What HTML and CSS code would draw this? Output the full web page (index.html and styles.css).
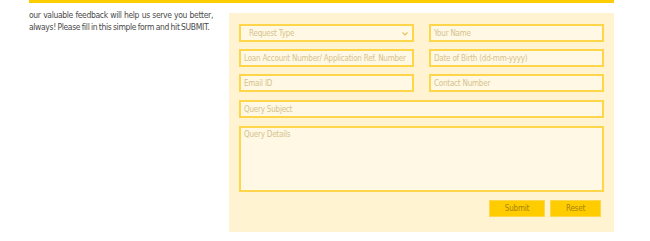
FILE: index.html
```html
<!DOCTYPE html>
<html>
<head>
<meta charset="utf-8">
<link rel="stylesheet" href="styles.css">
</head>
<body>
<div class="page">
  <div class="topline"></div>
  <div class="content">
    <p class="intro">our valuable feedback will help us serve you better, always! Please fill in this simple form and hit SUBMIT.</p>
    <form class="panel">
      <div class="row">
        <div class="field select"><span>Request Type</span>
          <svg class="chev" width="6" height="4" viewBox="0 0 6 4"><path d="M0.5 0.5 L3 3 L5.5 0.5" fill="none" stroke="#e8c25a" stroke-width="1.2"/></svg>
        </div>
        <div class="field"><span>Your Name</span></div>
      </div>
      <div class="row">
        <div class="field"><span>Loan Account Number/ Application Ref. Number</span></div>
        <div class="field"><span>Date of Birth (dd-mm-yyyy)</span></div>
      </div>
      <div class="row">
        <div class="field"><span>Email ID</span></div>
        <div class="field"><span>Contact Number</span></div>
      </div>
      <div class="row">
        <div class="field wide"><span>Query Subject</span></div>
      </div>
      <div class="row">
        <div class="field wide area"><span>Query Details</span></div>
      </div>
      <div class="buttons">
        <div class="btn submit">Submit</div>
        <div class="btn reset">Reset</div>
      </div>
    </form>
  </div>
</div>
</body>
</html>
```
FILE: styles.css
```css
html, body {
  margin: 0;
  padding: 0;
  background: #ffffff;
}
.page {
  margin-left: 29px;
  width: 585px;
  font-family: "DejaVu Sans Condensed", "Liberation Sans", sans-serif;
}
.topline {
  height: 3px;
  background: #ffcc00;
}
.content {
  display: flex;
  align-items: flex-start;
}
.intro {
  width: 184px;
  margin: 6px 0 0 0;
  font-size: 8.5px;
  line-height: 12px;
  letter-spacing: -0.35px;
  word-spacing: -0.5px;
  color: #4a4a4a;
  text-align: justify;
}
.panel {
  margin: 10px 0 0 16px;
  width: 385px;
  box-sizing: border-box;
  background: #fff3d2;
  padding: 11px 10px 15px 10px;
  display: flex;
  flex-direction: column;
  height: 219px;
}
.row {
  display: flex;
  gap: 15px;
  margin-bottom: 7px;
  width: 365px;
}
.row:nth-child(3), .row:nth-child(4) {
  margin-bottom: 8px;
}
.field {
  width: 175px;
  height: 18px;
  box-sizing: border-box;
  border: 2px solid #ffd54a;
  background: #fff8e4;
  display: flex;
  align-items: center;
  padding-left: 3px;
  font-size: 8px;
  letter-spacing: -0.22px;
  white-space: nowrap;
  color: #d6c28c;
  position: relative;
}
.field.select {
  padding-left: 8px;
}
.field.wide {
  width: 365px;
}
.field.area {
  height: 66px;
  align-items: flex-start;
  padding-top: 2px;
}
.chev {
  position: absolute;
  right: 4px;
  top: 6px;
}
.buttons {
  display: flex;
  justify-content: flex-end;
  gap: 5px;
  width: 362px;
  margin-top: 1px;
}
.btn {
  height: 17px;
  background: #ffcc00;
  color: #a8850c;
  font-size: 8px;
  letter-spacing: -0.2px;
  display: flex;
  align-items: center;
  justify-content: center;
  border: 1px solid #ffd84a;
  box-sizing: border-box;
}
.submit { width: 56px; }
.reset { width: 51px; }
```
